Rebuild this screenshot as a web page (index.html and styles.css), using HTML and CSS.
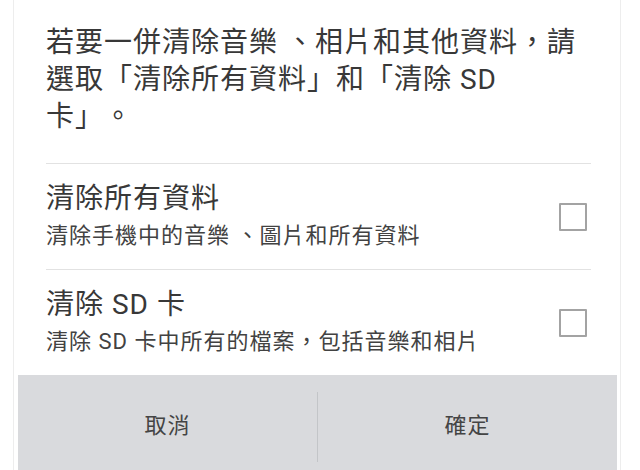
FILE: index.html
```html
<!DOCTYPE html>
<html lang="zh-Hant">
<head>
<meta charset="utf-8">
<title>清除資料</title>
<link rel="stylesheet" href="styles.css">
</head>
<body>
<div class="dialog">
  <div class="content">
    <p class="message">若要一併清除音樂 、相片和其他資料，請選取「清除所有資料」和「清除 SD 卡」。</p>
    <div class="option">
      <div class="option-text">
        <div class="option-title">清除所有資料</div>
        <div class="option-sub">清除手機中的音樂 、圖片和所有資料</div>
      </div>
      <span class="checkbox"></span>
    </div>
    <div class="option">
      <div class="option-text">
        <div class="option-title">清除 SD 卡</div>
        <div class="option-sub">清除 SD 卡中所有的檔案，包括音樂和相片</div>
      </div>
      <span class="checkbox"></span>
    </div>
  </div>
  <div class="buttons">
    <div class="btn">取消</div>
    <div class="btn-sep"></div>
    <div class="btn">確定</div>
  </div>
</div>
</body>
</html>
```
FILE: styles.css
```css
html, body {
  margin: 0;
  padding: 0;
  background: #ffffff;
  height: 470px;
  overflow: hidden;
}

body {
  font-family: Roboto, "Noto Sans CJK TC", "Noto Sans", sans-serif;
  color: #383838;
  text-spacing-trim: space-all;
}

.dialog {
  margin: 0 19px 0 13px;
  height: 470px;
  border-left: 1px solid #ededed;
  border-right: 1px solid #ededed;
  display: flex;
  flex-direction: column;
}

.content {
  padding: 0 29px 0 32px;
}

.message {
  margin: 0;
  padding: 24px 0 28px;
  font-size: 28px;
  line-height: 37px;
  letter-spacing: 1px;
  border-bottom: 1px solid #e2e2e2;
}

.option {
  display: flex;
  align-items: center;
  padding: 18px 0;
  height: 69px;
}

.option + .option {
  border-top: 1px solid #e2e2e2;
}

.option-text {
  flex: 1;
  display: flex;
  flex-direction: column;
  gap: 5px;
}

.option-title {
  font-size: 28px;
  line-height: 34px;
  letter-spacing: 1px;
}

.option-sub {
  font-size: 22px;
  line-height: 30px;
  letter-spacing: 1px;
  color: #424242;
}

.checkbox {
  width: 24px;
  height: 24px;
  border: 2px solid #a3a3a3;
  border-radius: 1px;
  margin-right: 4px;
}

.buttons {
  margin: 0 3px 0 4px;
  flex: 1;
  background: #d9dadd;
  display: flex;
}

.btn {
  flex: 1;
  display: flex;
  align-items: center;
  justify-content: center;
  font-size: 22px;
  color: #444444;
  letter-spacing: 1px;
}

.btn-sep {
  width: 1px;
  margin: 17px 0 8px;
  background: #c3c5c8;
}
```
